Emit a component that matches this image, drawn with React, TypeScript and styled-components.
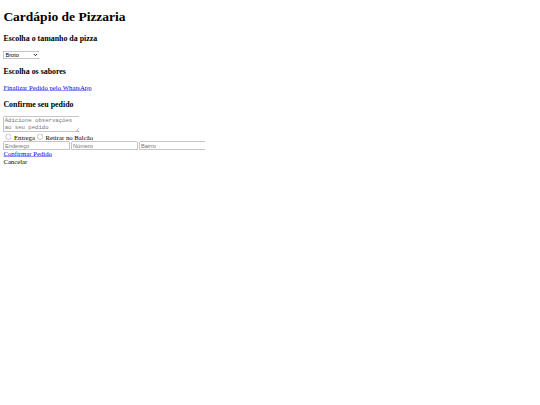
import React, { useState } from 'react';
import styled, { createGlobalStyle } from 'styled-components';

const GlobalStyle = createGlobalStyle`
  html, body {
    margin: 0;
    background: #fff;
    overflow: hidden;
  }
  body {
    font-family: "Liberation Serif", "Times New Roman", serif;
    color: #000;
  }
`;

// form laid out at desktop size, then shrunk to fit the small window
const Page = styled.div`
  display: flow-root;
  box-sizing: border-box;
  width: 1280px;
  padding: 0 8px;
  font-size: 16px;
  transform: scale(0.421875);
  transform-origin: 0 0;
`;

const Title = styled.h1`
  font-size: 2em;
  margin: 0.67em 0;
`;

const SectionTitle = styled.h3`
  font-size: 1.17em;
  margin: 1em 0;
`;

const SizeSelect = styled.select`
  width: 85px;
  font-family: "Liberation Sans", Arial, sans-serif;
  font-size: 13.33px;
`;

const Flavours = styled.div``;

const Link = styled.a`
  color: #0000ee;
  text-decoration: underline;
  cursor: pointer;
`;

const Paragraph = styled.p`
  margin: 1em 0;
`;

const Notes = styled.textarea`
  box-sizing: border-box;
  width: 180px;
  height: 37px;
  font-family: "Liberation Mono", "Courier New", monospace;
  font-size: 13.33px;
  vertical-align: bottom;
`;

const Block = styled.div``;

const Radio = styled.input`
  width: 14px;
  height: 14px;
  margin: 4px 6px 0 5px;
`;

const Field = styled.input`
  box-sizing: border-box;
  width: 157px;
  height: 21px;
  font-family: "Liberation Sans", Arial, sans-serif;
  font-size: 13.33px;
`;

const sizes = ['Broto', 'Média', 'Grande', 'Família'];

export default function App() {
  const [size, setSize] = useState('Broto');
  const [delivery, setDelivery] = useState('');

  return (
    <>
      <GlobalStyle />
      <Page>
        <Title>Cardápio de Pizzaria</Title>
        <SectionTitle>Escolha o tamanho da pizza</SectionTitle>
        <SizeSelect value={size} onChange={(e) => setSize(e.target.value)}>
          {sizes.map((s) => (
            <option key={s}>{s}</option>
          ))}
        </SizeSelect>
        <SectionTitle>Escolha os sabores</SectionTitle>
        <Flavours />
        <Paragraph>
          <Link>Finalizar Pedido pelo WhatsApp</Link>
        </Paragraph>
        <SectionTitle>Confirme seu pedido</SectionTitle>
        <Block>
          <Notes placeholder="Adicione observações ao seu pedido" />
        </Block>
        <Block>
          <label>
            <Radio
              type="radio"
              name="entrega"
              checked={delivery === 'entrega'}
              onChange={() => setDelivery('entrega')}
            />
            Entrega
          </label>
          <label>
            <Radio
              type="radio"
              name="entrega"
              checked={delivery === 'balcao'}
              onChange={() => setDelivery('balcao')}
            />
            Retirar no Balcão
          </label>
        </Block>
        <Block>
          <Field placeholder="Endereço" /> <Field placeholder="Número" />{' '}
          <Field placeholder="Bairro" />
        </Block>
        <Block>
          <Link>Confirmar Pedido</Link>
        </Block>
        <Block>Cancelar</Block>
      </Page>
    </>
  );
}
